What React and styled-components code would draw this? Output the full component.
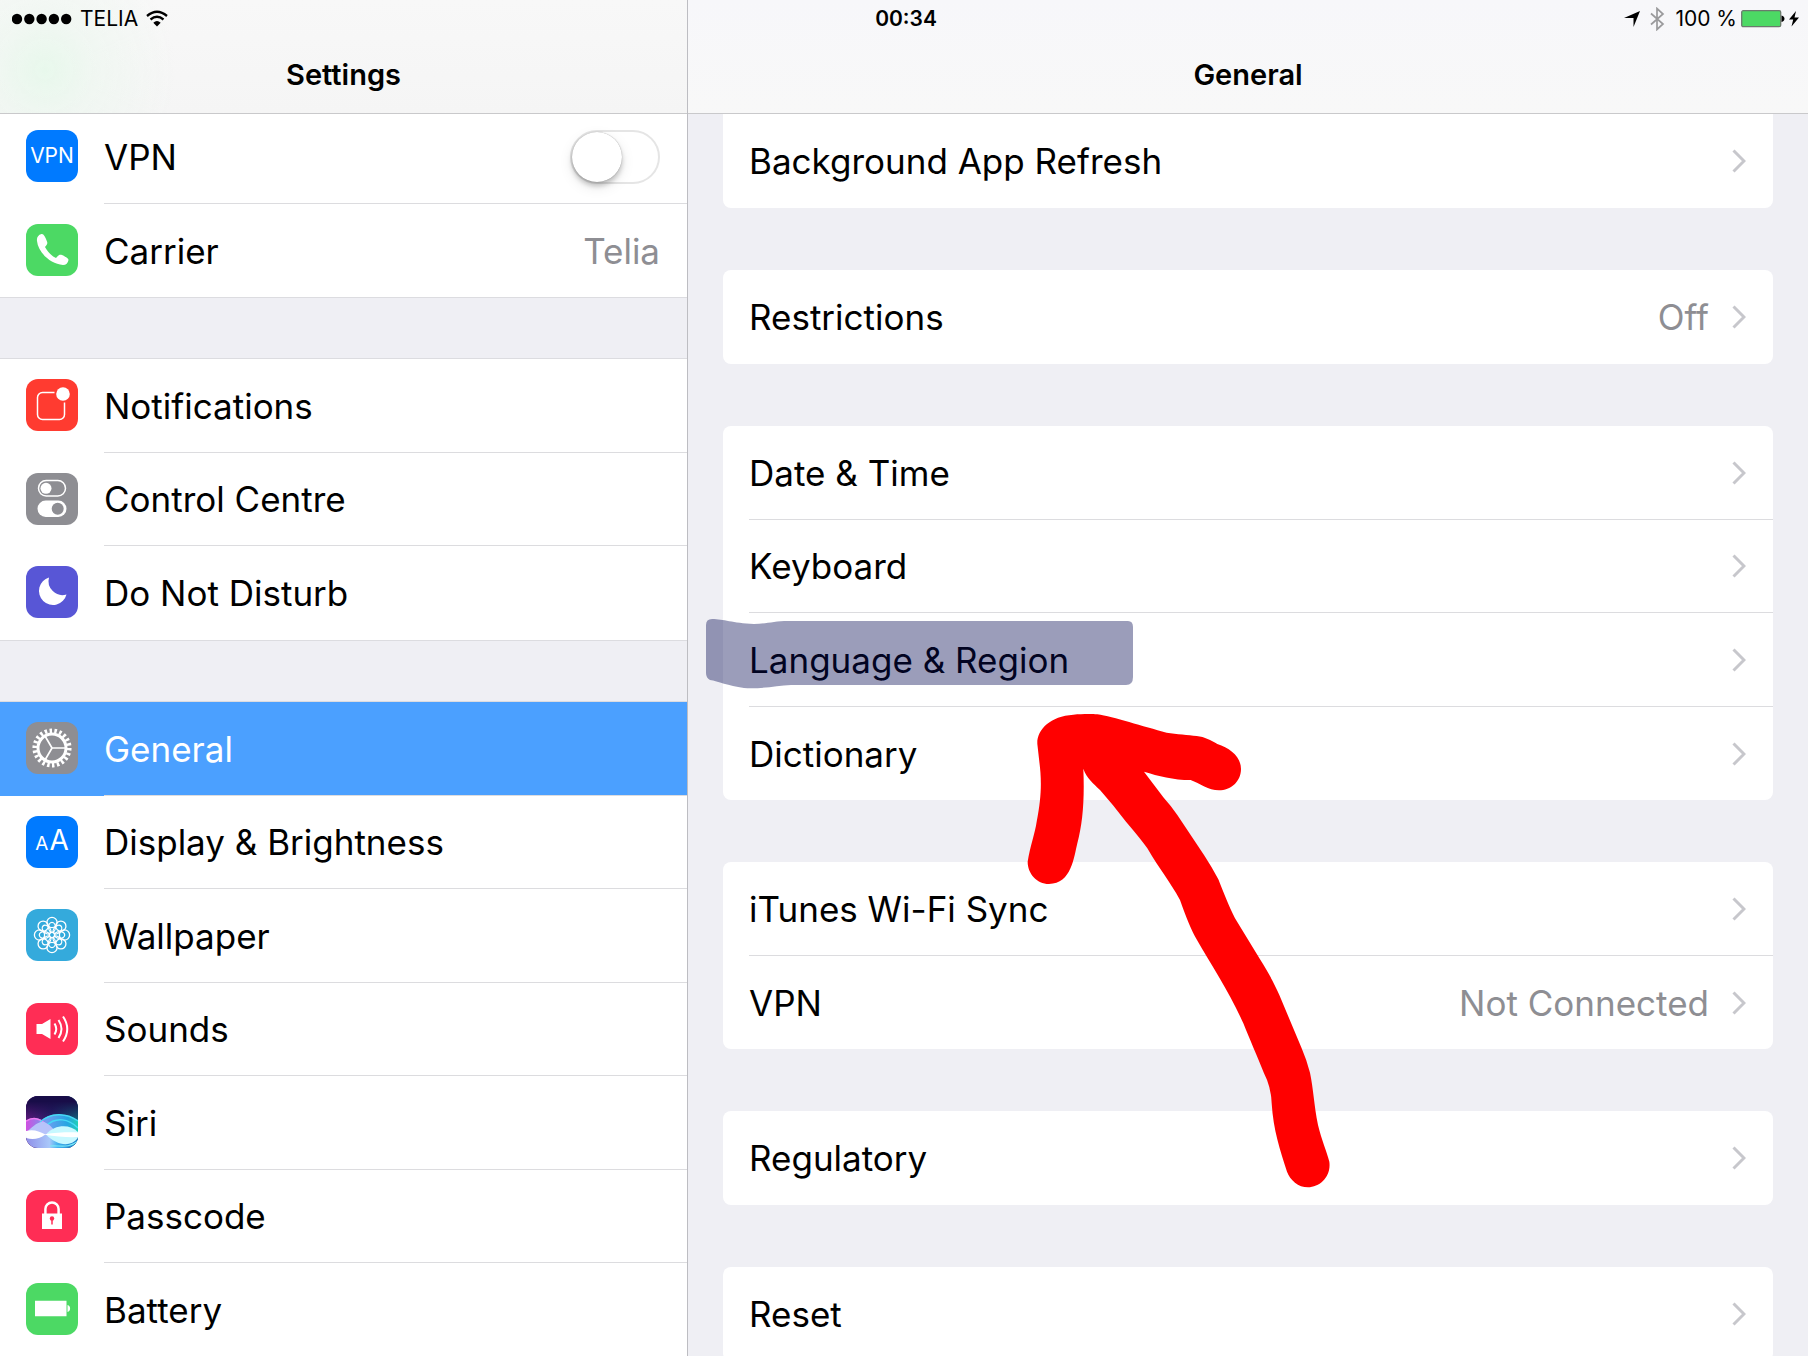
import React from "react";
import styled, { createGlobalStyle, css } from "styled-components";

const GlobalStyle = createGlobalStyle`
  * {
    box-sizing: border-box;
  }
  body {
    margin: 0;
    overflow: hidden;
    background: #efeff4;
    color: #000;
    font-family: Inter, "Liberation Sans", sans-serif;
  }
  a {
    color: inherit;
    text-decoration: none;
  }
  ul {
    list-style: none;
    margin: 0;
    padding: 0;
  }
`;

const Page = styled.div`
  position: relative;
  display: flex;
  height: 100vh;
  overflow: hidden;
`;

const StatusBar = styled.div`
  position: absolute;
  top: 0;
  left: 0;
  right: 0;
  z-index: 2;
  display: grid;
  grid-template-columns: 1fr auto 1fr;
  align-items: center;
  height: 37px;
  padding: 0 8px 0 12px;
  font-size: 21px;
  line-height: 24px;
`;

const StatusSide = styled.div`
  display: flex;
  align-items: center;
  justify-content: ${(props) => (props.$end ? "flex-end" : "flex-start")};
  gap: ${(props) => (props.$end ? "4px" : "8px")};
  svg {
    display: block;
  }
`;

const Clock = styled.time`
  font-weight: 600;
`;

const Sidebar = styled.nav`
  width: 38%;
  flex: none;
`;

const Detail = styled.main`
  flex: 1;
  min-width: 0;
  border-left: 1px solid #bdbdc2;
`;

const Header = styled.header`
  position: relative;
  z-index: 1;
  height: 114px;
  padding-top: 36px;
  display: flex;
  align-items: center;
  justify-content: center;
  border-bottom: 1px solid #c9c9cb;
  background: ${(props) =>
    props.$tinted
      ? "radial-gradient(circle at 45px 70px, #e8f8ec 0, rgba(238, 247, 240, 0.7) 50px, rgba(246, 247, 246, 0) 130px), linear-gradient(#f8f8f8, #f5f5f5)"
      : "linear-gradient(#f7f7fa, #f8f8f8)"};
`;

const Title = styled.h1`
  margin: 0;
  font-size: 29px;
  line-height: 36px;
  font-weight: 600;
`;

/* the sidebar list is scrolled a little way under its header */
const SidebarGroups = styled.div`
  display: flex;
  flex-direction: column;
  gap: 62px;
  margin-top: -4px;
`;

const SidebarGroup = styled.ul`
  background: #fff;
  box-shadow: 0 -1px 0 #dcdce0, 0 1px 0 #dcdce0;
`;

const Cards = styled.div`
  display: flex;
  flex-direction: column;
  gap: 62px;
  padding: 0 35px;
`;

const Card = styled.ul`
  background: #fff;
  border-radius: ${(props) => (props.$cut ? "0 0 8px 8px" : "8px")};
`;

const Item = styled.li`
  position: relative;
  height: 94px;
  &:nth-child(even) {
    height: 93px;
  }
`;

const rowStyle = css`
  display: flex;
  align-items: center;
  height: 100%;
  font-size: 35px;
  line-height: 44px;
`;

const SidebarRow = styled.a`
  ${rowStyle};
  gap: 26px;
  padding-left: 26px;
  ${(props) =>
    props.$selected &&
    css`
      background: #4ba0ff;
      color: #fff;
    `}
`;

const SidebarBody = styled.span`
  flex: 1;
  align-self: stretch;
  display: flex;
  align-items: center;
  justify-content: space-between;
  padding-right: 27px;
  ${Item}:not(:last-child) & {
    border-bottom: 1px solid #dcdcdf;
  }
`;

const CardRow = styled.a`
  ${rowStyle};
  padding-left: 26px;
`;

const CardBody = styled.span`
  flex: 1;
  align-self: stretch;
  display: flex;
  align-items: center;
  gap: 23px;
  padding-right: 27px;
  ${Item}:not(:last-child) & {
    border-bottom: 1px solid #dcdcdf;
  }
`;

const Label = styled.span`
  flex: 1;
`;

const Value = styled.span`
  color: #8e8e93;
`;

const Tile = styled.span`
  flex: none;
  display: flex;
  align-items: center;
  justify-content: center;
  width: 52px;
  height: 52px;
  margin-bottom: 2px;
  border-radius: 12px;
  overflow: hidden;
  background: ${(props) => props.$color};
  color: #fff;
  font-size: 21px;
  line-height: 28px;
`;

const Letters = styled.span`
  display: flex;
  align-items: baseline;
  gap: 1px;
  font-size: 19px;
`;

const BigLetter = styled.span`
  font-size: 28px;
`;

const Switch = styled.input`
  appearance: none;
  display: flex;
  width: 90px;
  height: 54px;
  margin: 0;
  border: 2px solid #e5e5e5;
  border-radius: 27px;
  background: #fff;
  &::before {
    content: "";
    width: 50px;
    height: 50px;
    border-radius: 50%;
    background: #fff;
    box-shadow: 0 4px 5px rgba(0, 0, 0, 0.2), 0 5px 14px rgba(0, 0, 0, 0.1),
      0 0 1px rgba(0, 0, 0, 0.4);
  }
  &:checked {
    background: #4cd964;
    justify-content: flex-end;
  }
`;

const Marker = styled.svg`
  position: absolute;
  left: -17px;
  top: 6px;
  pointer-events: none;
`;

const Arrow = styled.svg`
  position: absolute;
  z-index: 1;
  left: 304px;
  top: 100px;
  pointer-events: none;
`;

const Glyph = ({ children }) => (
  <svg width="52" height="52" viewBox="0 0 52 52" fill="none" aria-hidden="true">
    {children}
  </svg>
);

const Chevron = () => (
  <svg width="14" height="24" viewBox="0 0 14 24" fill="none" aria-hidden="true">
    <path d="M1.5 1.5 12 12 1.5 22.5" stroke="#c7c7cc" strokeWidth="3" />
  </svg>
);

const PhoneIcon = () => (
  <Glyph>
    <path
      fill="#fff"
      d="M15.5 10C12 11 10.5 13.5 11 17C12 28 24 40 37 41C40 41 42 39 42.5 36C42.5 34.5 41 33.5 36 31C33 30 32 32 30 34C26 32.5 21 27 19 23C20.5 21 22 20 21 17.5C19 12 17.5 9.5 15.5 10Z"
    />
  </Glyph>
);

const NotificationsIcon = () => (
  <Glyph>
    <path
      stroke="#fff"
      strokeWidth="1.5"
      d="M28.5 13.5H16.5a5 5 0 0 0-5 5V35.5a5 5 0 0 0 5 5H33.5a5 5 0 0 0 5-5V23.5"
    />
    <circle cx="37" cy="15" r="6.8" fill="#fff" />
  </Glyph>
);

const ControlCentreIcon = () => (
  <Glyph>
    <rect x="12.5" y="7.5" width="27" height="15.5" rx="7.7" stroke="#fff" strokeWidth="1.5" />
    <circle cx="20" cy="15.3" r="5.5" fill="#fff" />
    <rect x="11.5" y="27.5" width="29" height="16.5" rx="8.2" fill="#fff" />
    <circle cx="31.7" cy="35.7" r="6" fill="#8e8e93" />
  </Glyph>
);

const MoonIcon = () => (
  <Glyph>
    <path fill="#fff" d="M23 11.5A14 14 0 1 0 40.5 28.5A14 14 0 0 1 23 11.5Z" />
  </Glyph>
);

const GearIcon = () => (
  <Glyph>
    <g stroke="#fff">
      <circle cx="26" cy="26" r="14" strokeWidth="3" />
      <circle cx="26" cy="26" r="17.3" strokeWidth="4.5" pathLength="44" strokeDasharray="1 1" />
      <path d="M26 26H40M26 26 19 14M26 26 19 38" strokeWidth="1.7" />
    </g>
  </Glyph>
);

const PETALS = [0, 45, 90, 135, 180, 225, 270, 315];

const FlowerIcon = () => (
  <Glyph>
    <g stroke="#fff" strokeWidth="1.3">
      {PETALS.map((angle) => (
        <g key={angle} transform={`rotate(${angle} 26 26)`}>
          <circle cx="26" cy="13.5" r="5.1" />
          <ellipse cx="26" cy="18.3" rx="3.4" ry="5" />
        </g>
      ))}
      <circle cx="26" cy="26" r="2.6" />
    </g>
  </Glyph>
);

const SpeakerIcon = () => (
  <Glyph>
    <path fill="#fff" d="M10.5 21H16L24.5 16V36L16 31H10.5Z" />
    <g stroke="#fff" strokeWidth="2">
      <path d="M28.5 20.5Q32 26 28.5 31.5" />
      <path d="M32.5 17Q38.5 26 32.5 35" />
      <path d="M37 13.5Q45.5 26 37 38.5" />
    </g>
  </Glyph>
);

const SiriIcon = () => (
  <Glyph>
    <defs>
      <linearGradient id="siri-sky" x1="0" y1="0" x2="1" y2="0">
        <stop offset="0" stopColor="#6a1a86" />
        <stop offset="0.5" stopColor="#2b2370" />
        <stop offset="1" stopColor="#0f7386" />
      </linearGradient>
      <linearGradient id="siri-shade" x1="0" y1="0" x2="0" y2="1">
        <stop offset="0.2" stopColor="#180d48" />
        <stop offset="1" stopColor="#180d48" stopOpacity="0" />
      </linearGradient>
      <linearGradient id="siri-wave" x1="0" y1="0" x2="1" y2="0">
        <stop offset="0" stopColor="#d04fe0" />
        <stop offset="0.4" stopColor="#6d9ef0" />
        <stop offset="0.8" stopColor="#25a5e2" />
        <stop offset="1" stopColor="#1fd0b4" />
      </linearGradient>
      <linearGradient id="siri-low" x1="0" y1="0" x2="1" y2="0">
        <stop offset="0" stopColor="#8f8fe8" />
        <stop offset="0.45" stopColor="#a9c8fa" />
        <stop offset="0.6" stopColor="#45b4f0" />
        <stop offset="1" stopColor="#1479c8" />
      </linearGradient>
    </defs>
    <path fill="url(#siri-sky)" d="M0 0H52V52H0Z" />
    <path fill="url(#siri-shade)" d="M0 0H52V27H0Z" />
    <path fill="url(#siri-wave)" d="M0 25C6 22 11 22 16 24C24 17 40 16 52 25V40H0Z" />
    <path fill="url(#siri-low)" d="M0 38H52V52H0Z" />
    <path stroke="#f07df4" strokeWidth="1.5" d="M0 25C7 21 14 22 20 29" />
    <path stroke="#45d9f5" strokeWidth="1.5" d="M14 26C24 17 40 16 52 25M20 30C30 20 43 23 52 32" />
    <path fill="#b7c3fa" d="M2 35C8 29 14 25 18 26C24 28 28 34 31 37L20 39Z" />
    <path fill="#c7f8ff" d="M20 38.5C29 28 44 28 52 36V42C44 52 30 49 20 38.5Z" />
    <path fill="#fff" d="M0 35C7 33 13 35 19 38.3C30 36.5 43 36 52 36.5V41C42 41.5 30 40.5 19 38.7C13 43 7 44 0 42Z" />
    <path stroke="#7beaf6" strokeWidth="1.2" d="M24 50C33 49 43 53 52 45" />
  </Glyph>
);

const LockIcon = () => (
  <Glyph>
    <path stroke="#fff" strokeWidth="2.5" d="M19.4 24V19a6.600 6.600 0 0 1 13.200 0V24" />
    <path fill="#fff" d="M16 23.5H36V39H16Z" />
    <circle cx="26" cy="28.5" r="2.2" fill="#ff2d55" />
    <path stroke="#ff2d55" strokeWidth="1.5" d="M26 29V34.5" />
  </Glyph>
);

const BatteryIcon = () => (
  <Glyph>
    <path fill="#fff" d="M9 17.7H40.5V33.3H9ZM41.5 22C45 22.5 45 28.5 41.5 29Z" />
  </Glyph>
);

const SignalDots = () => (
  <svg width="60" height="12" viewBox="0 0 60 12" role="img" aria-label="Signal strength">
    {[5, 17.3, 29.6, 41.9, 54.2].map((x) => (
      <circle key={x} cx={x} cy="6" r="5.2" />
    ))}
  </svg>
);

const WifiIcon = () => (
  <svg width="22" height="17" viewBox="0 0 22 17" fill="none" role="img" aria-label="Wi-Fi">
    <path d="M1 6Q11-2.5 21 6M4.5 9.5Q11 4 17.5 9.5" stroke="#000" strokeWidth="2.3" />
    <path d="M7.3 12.7Q11 9.5 14.7 12.7L11 16.5Z" fill="#000" />
  </svg>
);

const StatusIcons = () => (
  <svg width="47" height="24" viewBox="0 0 47 24" fill="none" aria-hidden="true">
    <path fill="#000" d="M0 11 16 4 9.5 20V11Z" />
    <path stroke="#9a9a9c" strokeWidth="1.7" d="M27 6.5 39 17 33 22.5V1.5L39 7 27 17.5" />
  </svg>
);

const StatusBattery = () => (
  <svg width="59" height="18" viewBox="0 0 59 18" fill="none" role="img" aria-label="Charging">
    <rect x="0.7" y="0.7" width="39" height="16" rx="1.5" fill="#4cd964" stroke="#6b7a6d" strokeWidth="1.3" />
    <path fill="#000" d="M40.5 5.5C44.5 6 44.5 11.5 40.5 12Z" />
    <path fill="#000" d="M55 1 48 9.5H52.2L50.5 16.5 58 7.5H53.5Z" />
  </svg>
);

const sidebarGroups = [
  [
    { label: "VPN", color: "#007aff", icon: "VPN", toggle: true },
    { label: "Carrier", color: "#4cd964", icon: <PhoneIcon />, value: "Telia" },
  ],
  [
    { label: "Notifications", color: "#ff3b30", icon: <NotificationsIcon /> },
    { label: "Control Centre", color: "#8e8e93", icon: <ControlCentreIcon /> },
    { label: "Do Not Disturb", color: "#5856d6", icon: <MoonIcon /> },
  ],
  [
    { label: "General", color: "#8e8e93", icon: <GearIcon />, selected: true },
    {
      label: "Display & Brightness",
      color: "#007aff",
      icon: (
        <Letters>
          A<BigLetter>A</BigLetter>
        </Letters>
      ),
    },
    { label: "Wallpaper", color: "#34aadc", icon: <FlowerIcon /> },
    { label: "Sounds", color: "#ff2d55", icon: <SpeakerIcon /> },
    { label: "Siri", color: "#1d1450", icon: <SiriIcon /> },
    { label: "Passcode", color: "#ff2d55", icon: <LockIcon /> },
    { label: "Battery", color: "#4cd964", icon: <BatteryIcon /> },
  ],
];

const cards = [
  [{ label: "Background App Refresh" }],
  [{ label: "Restrictions", value: "Off" }],
  [
    { label: "Date & Time" },
    { label: "Keyboard" },
    { label: "Language & Region", marked: true },
    { label: "Dictionary" },
  ],
  [{ label: "iTunes Wi-Fi Sync" }, { label: "VPN", value: "Not Connected" }],
  [{ label: "Regulatory" }],
  [{ label: "Reset" }],
];

const SidebarItem = ({ label, color, icon, value, toggle, selected }) => (
  <Item>
    <SidebarRow
      as={toggle ? "label" : "a"}
      href={toggle ? undefined : "#"}
      $selected={selected}
      aria-current={selected ? "page" : undefined}
    >
      <Tile $color={color} aria-hidden="true">
        {icon}
      </Tile>
      <SidebarBody>
        <Label>{label}</Label>
        {value && <Value>{value}</Value>}
        {toggle && <Switch type="checkbox" role="switch" />}
      </SidebarBody>
    </SidebarRow>
  </Item>
);

const Annotation = () => (
  <>
    <Marker width="428" height="70" viewBox="0 0 428 70" aria-hidden="true">
      <path
        fill="rgba(5, 10, 82, 0.4)"
        d="M0 6Q0 0 6 0C18 0 26 4 48 5C60 5 68 2 82 2H422Q427 2 427 8V58Q427 66 420 66H85C70 67 55 70 38 69C22 67 12 62 4 61Q0 59 0 54Z"
      />
    </Marker>
    <Arrow width="303" height="475" viewBox="81 39 909 1425" aria-hidden="true">
      <path
        fill="#f00"
        d="M112 132C110 90 150 48 220 44C245 42 275 42 292 43C340 50 430 80 500 98C530 103 565 104 590 108C615 111 632 120 652 132C690 144 723 170 723 207C723 245 692 271 657 271C625 271 600 250 572 240C520 240 475 228 432 215L490 292Q515 320 532 345L612 465Q635 500 655 538C672 580 685 615 705 655L780 778C805 817 825 855 838 885L905 1045Q920 1080 930 1118C940 1165 942 1215 954 1275C965 1320 980 1355 988 1385C994 1430 960 1462 924 1462C895 1462 870 1440 861 1415C840 1350 820 1290 815 1210Q813 1160 792 1120C770 1065 750 1020 730 970C690 880 640 805 588 715Q568 680 540 600C510 545 480 510 442 445Q425 420 378 365Q340 315 300 270C280 250 260 235 250 206C254 300 248 370 232 430C222 470 215 552 147 552C110 552 83 520 83 485C90 440 105 400 110 365C125 290 125 240 118 185Z"
      />
    </Arrow>
  </>
);

const CardItem = ({ label, value, marked }) => (
  <Item>
    <CardRow href="#">
      <CardBody>
        <Label>{label}</Label>
        {value && <Value>{value}</Value>}
        <Chevron />
      </CardBody>
    </CardRow>
    {marked && <Annotation />}
  </Item>
);

export default () => (
  <Page>
    <GlobalStyle />
    <StatusBar>
      <StatusSide>
        <SignalDots />
        TELIA
        <WifiIcon />
      </StatusSide>
      <Clock>00:34</Clock>
      <StatusSide $end>
        <StatusIcons />
        100 %
        <StatusBattery />
      </StatusSide>
    </StatusBar>
    <Sidebar>
      <Header $tinted>
        <Title>Settings</Title>
      </Header>
      <SidebarGroups>
        {sidebarGroups.map((group) => (
          <SidebarGroup key={group[0].label}>
            {group.map((item) => (
              <SidebarItem key={item.label} {...item} />
            ))}
          </SidebarGroup>
        ))}
      </SidebarGroups>
    </Sidebar>
    <Detail>
      <Header>
        <Title as="h2">General</Title>
      </Header>
      <Cards>
        {cards.map((card, index) => (
          <Card key={card[0].label} $cut={index === 0}>
            {card.map((item) => (
              <CardItem key={item.label} {...item} />
            ))}
          </Card>
        ))}
      </Cards>
    </Detail>
  </Page>
);
